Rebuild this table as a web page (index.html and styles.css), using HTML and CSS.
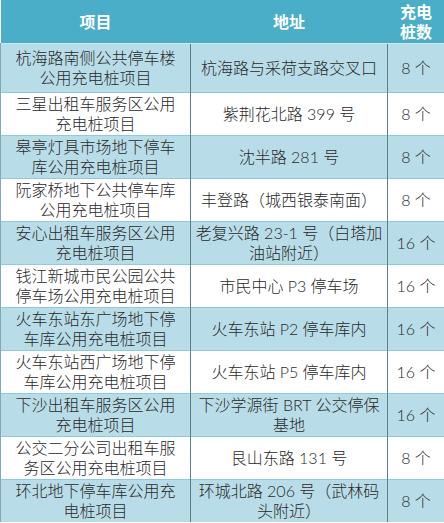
FILE: index.html
```html
<!DOCTYPE html>
<html lang="zh-CN">
<head>
<meta charset="utf-8">
<title>充电桩项目</title>
<link rel="stylesheet" href="styles.css">
</head>
<body>
<table class="grid">
  <colgroup>
    <col class="c-name">
    <col class="c-addr">
    <col class="c-num">
  </colgroup>
  <thead>
    <tr class="head">
      <th>项目</th>
      <th>地址</th>
      <th>充电<br>桩数</th>
    </tr>
  </thead>
  <tbody>
    <tr class="alt first"><td>杭海路南侧公共停车楼<br>公用充电桩项目</td><td>杭海路与采荷支路交叉口</td><td>8 个</td></tr>
    <tr><td>三星出租车服务区公用<br>充电桩项目</td><td>紫荆花北路 399 号</td><td>8 个</td></tr>
    <tr class="alt"><td>皋亭灯具市场地下停车<br>库公用充电桩项目</td><td>沈半路 281 号</td><td>8 个</td></tr>
    <tr><td>阮家桥地下公共停车库<br>公用充电桩项目</td><td>丰登路（城西银泰南面）</td><td>8 个</td></tr>
    <tr class="alt"><td>安心出租车服务区公用<br>充电桩项目</td><td>老复兴路 23-1 号（白塔加<br>油站附近）</td><td>16 个</td></tr>
    <tr><td>钱江新城市民公园公共<br>停车场公用充电桩项目</td><td>市民中心 P3 停车场</td><td>16 个</td></tr>
    <tr class="alt"><td>火车东站东广场地下停<br>车库公用充电桩项目</td><td>火车东站 P2 停车库内</td><td>16 个</td></tr>
    <tr><td>火车东站西广场地下停<br>车库公用充电桩项目</td><td>火车东站 P5 停车库内</td><td>16 个</td></tr>
    <tr class="alt"><td>下沙出租车服务区公用<br>充电桩项目</td><td>下沙学源街 BRT 公交停保<br>基地</td><td>16 个</td></tr>
    <tr><td>公交二分公司出租车服<br>务区公用充电桩项目</td><td>艮山东路 131 号</td><td>8 个</td></tr>
    <tr class="alt"><td>环北地下停车库公用充<br>电桩项目</td><td>环城北路 206 号（武林码<br>头附近）</td><td>8 个</td></tr>
  </tbody>
</table>
</body>
</html>
```

FILE: styles.css
```css
html, body {
  margin: 0;
  padding: 0;
  background: #ffffff;
}

.grid {
  width: 444px;
  border-collapse: collapse;
  table-layout: fixed;
  font-family: "Lato", "Noto Sans CJK SC", sans-serif;
  font-size: 16px;
  line-height: 20px;
  font-weight: 300;
  color: #2a2a2a;
}

.c-name { width: 190px; }
.c-addr { width: 197px; }
.c-num { width: 57px; }

.head th {
  height: 43px;
  padding: 0;
  background: #4aaec8;
  color: #ffffff;
  font-weight: 700;
  text-align: center;
  vertical-align: middle;
  border: none;
}

.grid td {
  height: 42px;
  padding: 0 4px;
  text-align: center;
  vertical-align: middle;
  background: #ffffff;
  border-top: 1px solid #8fcbdc;
  border-left: 1px solid #5f7f88;
  white-space: nowrap;
}

.grid td:first-child {
  border-left: 1px solid #7fa9b4;
}

.grid td:last-child {
  border-right: 1px solid #7fa9b4;
}

.grid tr.alt td {
  background: #b9dde8;
}

.grid tr.first td {
  height: 48px;
  border-top: 1px solid #c8eaf2;
}
```
